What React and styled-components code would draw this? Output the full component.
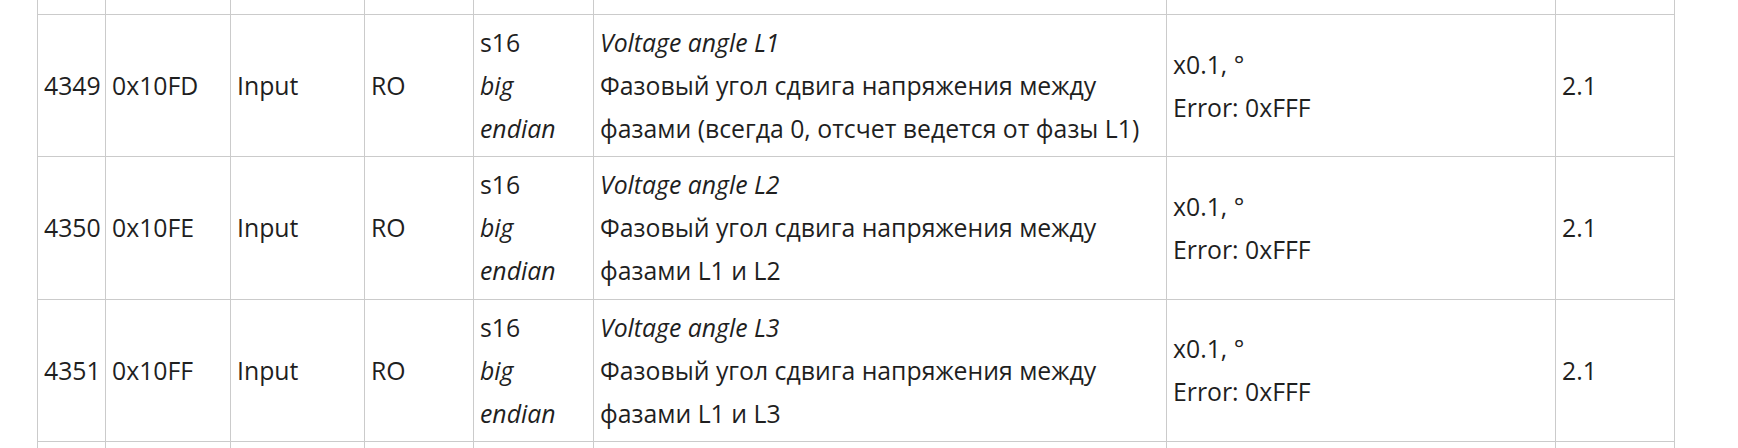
import React from "react";
import styled, { createGlobalStyle } from "styled-components";

const GlobalStyle = createGlobalStyle`
  html, body {
    margin: 0;
    padding: 0;
    background: #fff;
    overflow: hidden;
  }
`;

const Page = styled.div`
  width: 1738px;
  height: 448px;
  overflow: hidden;
  padding-left: 37px;
  box-sizing: border-box;
  font-family: "Open Sans", "Noto Sans", sans-serif;
  font-size: 24.8px;
  color: #1f1f1f;
`;

const Table = styled.table`
  border-collapse: collapse;
  table-layout: fixed;
  width: 1638px;
`;

const Cell = styled.td`
  border: 1px solid #cbcbcb;
  padding: 6px 6px;
  line-height: 43.1px;
  vertical-align: middle;
  white-space: nowrap;
  overflow: hidden;
`;

const EdgeCell = styled.td`
  border-left: 1px solid #cbcbcb;
  border-right: 1px solid #cbcbcb;
  padding: 0;
  height: ${(p) => p.$h}px;
`;

const Line = styled.div`
  font-style: ${(p) => (p.$italic ? "italic" : "normal")};
`;

const widths = [68, 125, 134, 109, 120, 573, 389, 119];

const rows = [
  {
    addr: 4349,
    hex: "0x10FD",
    name: "Voltage angle L1",
    desc: ["Фазовый угол сдвига напряжения между", "фазами (всегда 0, отсчет ведется от фазы L1)"],
  },
  {
    addr: 4350,
    hex: "0x10FE",
    name: "Voltage angle L2",
    desc: ["Фазовый угол сдвига напряжения между", "фазами L1 и L2"],
  },
  {
    addr: 4351,
    hex: "0x10FF",
    name: "Voltage angle L3",
    desc: ["Фазовый угол сдвига напряжения между", "фазами L1 и L3"],
  },
];

const EdgeRow = ({ h }) => (
  <tr>
    {widths.map((_, i) => (
      <EdgeCell key={i} $h={h} />
    ))}
  </tr>
);

export default function App() {
  return (
    <>
      <GlobalStyle />
      <Page>
        <Table>
          <colgroup>
            {widths.map((w, i) => (
              <col key={i} style={{ width: w }} />
            ))}
          </colgroup>
          <tbody>
            <EdgeRow h={14} />
            {rows.map((r) => (
              <tr key={r.addr}>
                <Cell>{r.addr}</Cell>
                <Cell>{r.hex}</Cell>
                <Cell>Input</Cell>
                <Cell>RO</Cell>
                <Cell>
                  <Line>s16</Line>
                  <Line $italic>big</Line>
                  <Line $italic>endian</Line>
                </Cell>
                <Cell>
                  <Line $italic>{r.name}</Line>
                  {r.desc.map((d) => (
                    <Line key={d}>{d}</Line>
                  ))}
                </Cell>
                <Cell>
                  <Line>x0.1, °</Line>
                  <Line>Error: 0xFFF</Line>
                </Cell>
                <Cell>2.1</Cell>
              </tr>
            ))}
            <EdgeRow h={30} />
          </tbody>
        </Table>
      </Page>
    </>
  );
}
